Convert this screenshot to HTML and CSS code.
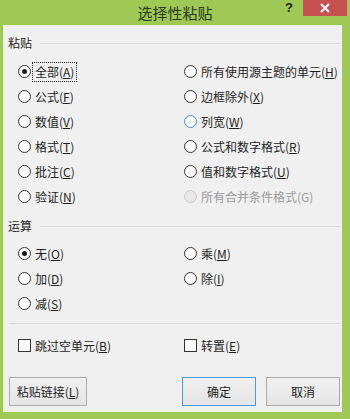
FILE: index.html
```html
<!DOCTYPE html>
<html lang="zh">
<head>
<meta charset="utf-8">
<title>选择性粘贴</title>
<link rel="stylesheet" href="styles.css">
</head>
<body>
<div class="window">
  <div class="titlebar">
    <div></div>
    <div class="title">选择性粘贴</div>
    <div class="caption-btns">
      <span class="help">?</span>
      <span class="close">
        <svg width="12" height="10" viewBox="0 0 12 10"><path d="M2 1 L10 9 M10 1 L2 9" stroke="#fff" stroke-width="2" fill="none"/></svg>
      </span>
    </div>
  </div>
  <div class="client">
    <div class="group-head"><span>粘贴</span><i class="rule"></i></div>
    <div class="options six">
      <label class="opt"><span class="radio checked"></span><span class="txt focus">全部(<u>A</u>)</span></label>
      <label class="opt"><span class="radio"></span><span class="txt">所有使用源主题的单元(<u>H</u>)</span></label>
      <label class="opt"><span class="radio"></span><span class="txt">公式(<u>F</u>)</span></label>
      <label class="opt"><span class="radio"></span><span class="txt">边框除外(<u>X</u>)</span></label>
      <label class="opt"><span class="radio"></span><span class="txt">数值(<u>V</u>)</span></label>
      <label class="opt"><span class="radio hover"></span><span class="txt">列宽(<u>W</u>)</span></label>
      <label class="opt"><span class="radio"></span><span class="txt">格式(<u>T</u>)</span></label>
      <label class="opt"><span class="radio"></span><span class="txt">公式和数字格式(<u>R</u>)</span></label>
      <label class="opt"><span class="radio"></span><span class="txt">批注(<u>C</u>)</span></label>
      <label class="opt"><span class="radio"></span><span class="txt">值和数字格式(<u>U</u>)</span></label>
      <label class="opt"><span class="radio"></span><span class="txt">验证(<u>N</u>)</span></label>
      <label class="opt disabled"><span class="radio"></span><span class="txt">所有合并条件格式(G)</span></label>
    </div>
    <div class="group-head op-head"><span>运算</span><i class="rule"></i></div>
    <div class="options three">
      <label class="opt"><span class="radio checked"></span><span class="txt">无(<u>O</u>)</span></label>
      <label class="opt"><span class="radio"></span><span class="txt">乘(<u>M</u>)</span></label>
      <label class="opt"><span class="radio"></span><span class="txt">加(<u>D</u>)</span></label>
      <label class="opt"><span class="radio"></span><span class="txt">除(<u>I</u>)</span></label>
      <label class="opt"><span class="radio"></span><span class="txt">减(<u>S</u>)</span></label>
    </div>
    <i class="sep"></i>
    <div class="options checks">
      <label class="opt"><span class="check"></span><span class="txt">跳过空单元(<u>B</u>)</span></label>
      <label class="opt"><span class="check"></span><span class="txt">转置(<u>E</u>)</span></label>
    </div>
    <div class="buttons">
      <button class="btn link">粘贴链接(<u>L</u>)</button>
      <div class="spacer"></div>
      <button class="btn default">确定</button>
      <button class="btn">取消</button>
    </div>
  </div>
</div>
</body>
</html>
```

FILE: styles.css
```css
* { box-sizing: border-box; }
html, body { margin: 0; padding: 0; }
body {
  font-family: "Noto Sans CJK SC", "Noto Sans", "Liberation Sans", sans-serif;
  font-size: 12px;
  color: #1e1e1e;
  background: #9fc955;
}
.window {
  width: 350px;
  height: 419px;
  background: #9fc955;
  display: flex;
  flex-direction: column;
}
.titlebar {
  height: 25px;
  display: grid;
  grid-template-columns: 1fr auto 1fr;
  align-items: start;
}
.title {
  font-size: 15px;
  line-height: 25px;
  color: #2a3a1a;
  text-align: center;
}
.caption-btns {
  justify-self: end;
  display: flex;
  align-items: flex-start;
  margin-right: 3px;
}
.help {
  width: 16px;
  height: 15px;
  margin-right: 6px;
  text-align: center;
  font-family: "Liberation Sans", sans-serif;
  font-weight: bold;
  font-size: 13px;
  line-height: 15px;
  color: #1a2a10;
}
.close {
  width: 44px;
  height: 16px;
  background: #c75050;
  display: flex;
  align-items: center;
  justify-content: center;
}
.close svg { display: block; }
.client {
  flex: 1;
  margin: 0 8px 7px 3px;
  background: #f0f0f0;
  padding: 8px 2px 0 0;
  display: flex;
  flex-direction: column;
}
.group-head {
  display: flex;
  align-items: center;
  height: 20px;
  padding-left: 5px;
}
.group-head span { line-height: 20px; }
.group-head .rule {
  flex: 1;
  height: 1px;
  margin-left: 8px;
  background: #d9d9d9;
}
.op-head { margin-top: 7px; }
.options {
  display: grid;
  grid-template-columns: 166px 1fr;
  grid-auto-rows: 25px;
  padding-left: 15px;
}
.six { margin-top: 6px; }
.three { margin-top: 5px; }
.opt {
  display: flex;
  align-items: center;
  white-space: nowrap;
}
.radio {
  width: 13px;
  height: 13px;
  border-radius: 50%;
  border: 1px solid #333;
  background: #fff;
  display: flex;
  align-items: center;
  justify-content: center;
  flex: none;
}
.radio.checked::after {
  content: "";
  width: 5px;
  height: 5px;
  border-radius: 50%;
  background: #1a1a1a;
}
.radio.hover { border-color: #3c8fdc; }
.disabled .radio { border-color: #c8c8c8; background: #e8e8e8; }
.disabled .txt { color: #9a9a9a; }
.txt {
  margin-left: 4px;
  line-height: 16px;
}
.txt.focus {
  outline: 1px dotted #222;
  outline-offset: 1px;
  padding: 0 1px;
  margin-left: 3px;
}
.sep {
  display: block;
  height: 1px;
  background: #d9d9d9;
  margin: 7px 0 0 6px;
}
.checks { margin-top: 9px; }
.check {
  width: 13px;
  height: 13px;
  border: 1px solid #333;
  background: #fff;
  flex: none;
}
.buttons {
  display: flex;
  margin-top: 19px;
  padding-left: 6px;
}
.spacer { flex: 1; }
.btn {
  height: 29px;
  width: 74px;
  font-family: inherit;
  font-size: 12px;
  color: #1e1e1e;
  background: linear-gradient(#f0f0f0, #e5e5e5);
  border: 1px solid #acacac;
  border-radius: 0;
  padding: 0;
  margin: 0;
}
.btn.link { width: 78px; }
.btn.default { border-color: #4a9ae0; margin-right: 10px; }
u { text-decoration: underline; text-underline-offset: 1px; }
```
